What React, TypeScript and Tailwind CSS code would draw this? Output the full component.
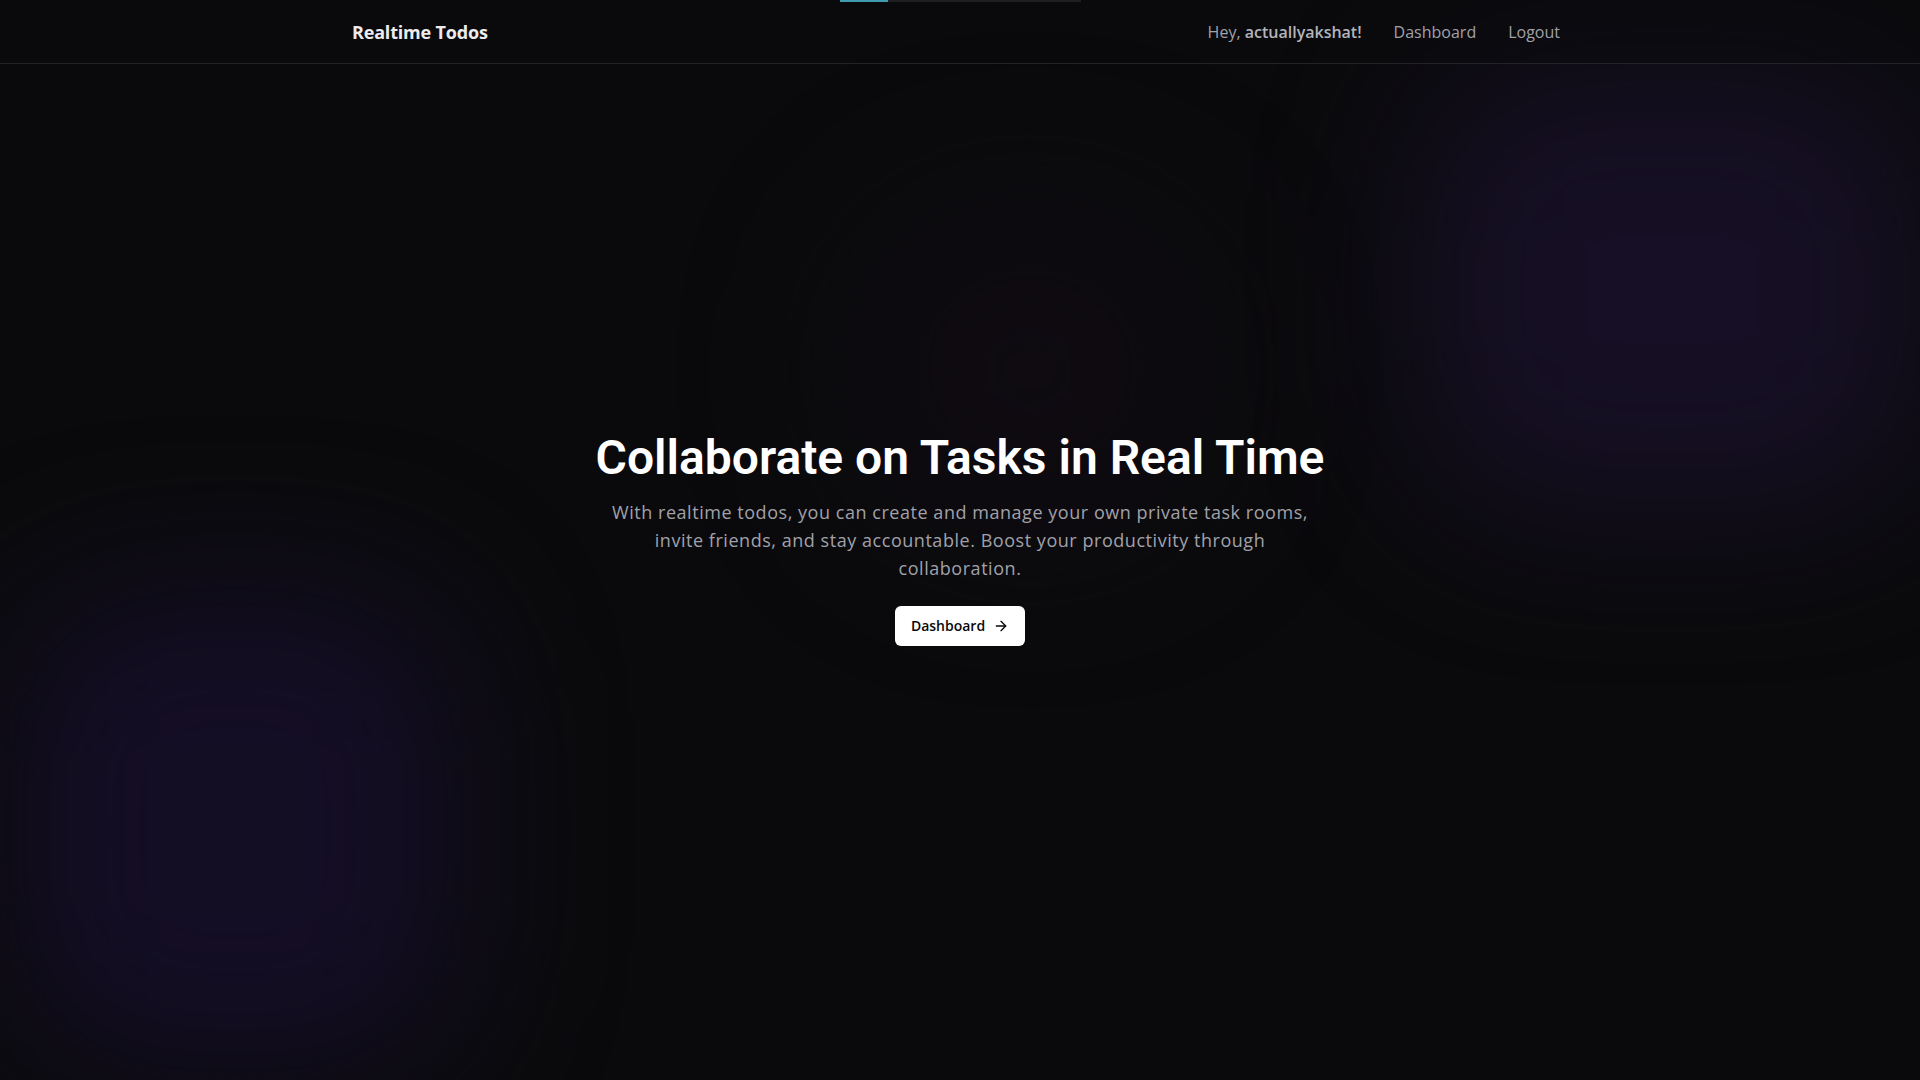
import { ArrowRight } from "lucide-react";

function TopLoader() {
  return (
    <div className="absolute top-0 left-0 right-0 z-50 flex justify-center">
      <div className="h-[2px] w-[241px] bg-[#1f1f22]">
        <div className="h-full w-[48px] bg-[#3f9bb0]" />
      </div>
    </div>
  );
}

function Navbar() {
  return (
    <header className="absolute top-0 left-0 right-0 z-40 h-16 border-b border-[#232327] bg-[#0a0a0c]/40">
      <div className="mx-auto flex h-full max-w-[1216px] items-center justify-between pr-2">
        <a className="text-lg font-bold tracking-[-0.01em] text-[#ececef]">Realtime Todos</a>
        <nav className="flex items-center gap-8 text-base">
          <span className="text-[#a1a1aa]">
            Hey, <span className="font-semibold text-[#b4b4bb]">actuallyakshat!</span>
          </span>
          <a className="font-medium text-[#a1a1aa]">Dashboard</a>
          <a className="font-medium text-[#a1a1aa]">Logout</a>
        </nav>
      </div>
    </header>
  );
}

export default function App() {
  return (
    <div
      className="relative min-h-screen overflow-hidden bg-[#0a0a0c] text-white"
      style={{ fontFamily: "'Open Sans', 'Noto Sans', sans-serif" }}
    >
      {/* glows */}
      <div className="pointer-events-none absolute left-[1420px] top-[70px] h-[440px] w-[500px] rounded-[120px] bg-[#1c1230] opacity-70 blur-[80px]" />
      <div className="pointer-events-none absolute left-[10px] top-[590px] h-[480px] w-[450px] rounded-[120px] bg-[#170f2c] opacity-80 blur-[80px]" />
      <div className="pointer-events-none absolute left-[860px] top-[220px] h-[300px] w-[340px] rounded-full bg-[#140c16] opacity-60 blur-[90px]" />

      <TopLoader />
      <Navbar />

      <main className="relative z-10 flex min-h-screen flex-col items-center justify-center px-6 text-center">
        <h1
          className="text-5xl leading-none font-semibold text-white"
          style={{ fontFamily: "Roboto, sans-serif" }}
        >
          Collaborate on Tasks in Real Time
        </h1>
        <p className="mt-4 max-w-[712px] text-lg leading-7 tracking-[0.03em] text-[#a1a1aa]">
          With realtime todos, you can create and manage your own private task rooms, invite friends, and stay
          accountable. Boost your productivity through collaboration.
        </p>
        <button className="mt-6 inline-flex h-10 items-center gap-2 rounded-md bg-white px-4 text-sm font-semibold text-[#09090b]">
          Dashboard
          <ArrowRight className="h-4 w-4" strokeWidth={2} />
        </button>
      </main>
    </div>
  );
}
